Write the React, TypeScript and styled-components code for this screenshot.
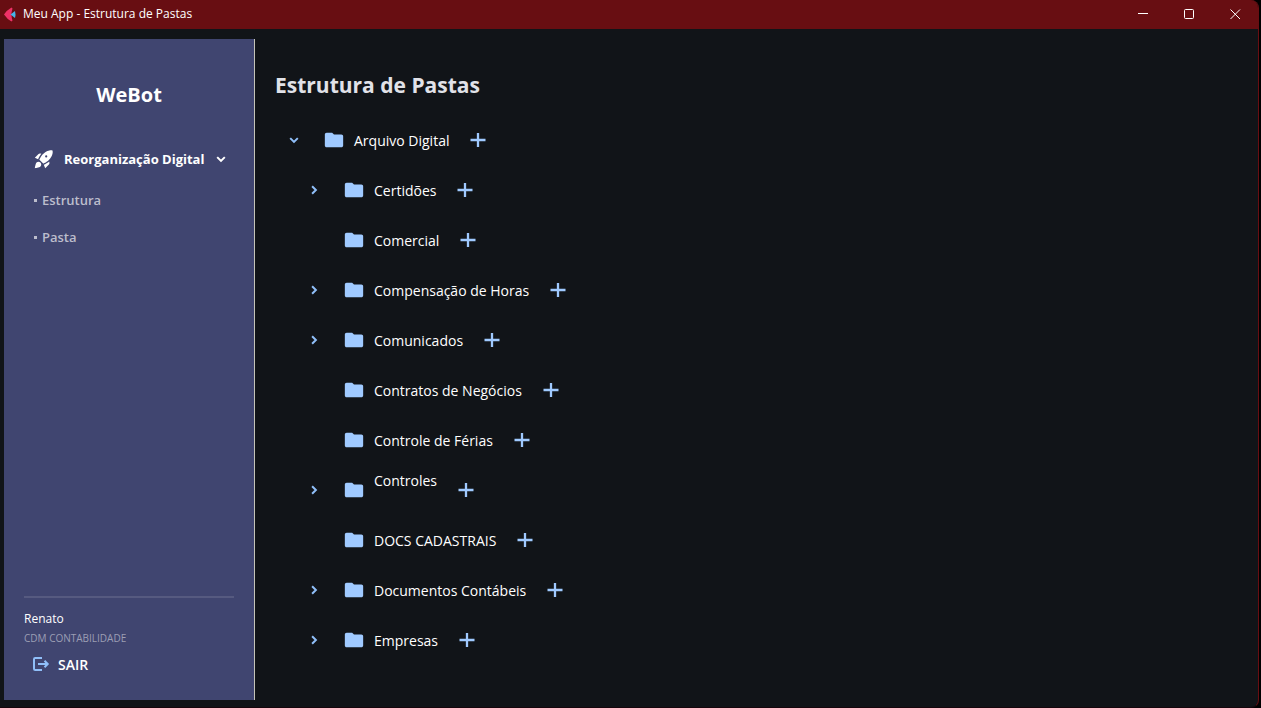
import React from "react";
import styled, { createGlobalStyle } from "styled-components";
import { MdFolder } from "react-icons/md";

const GlobalStyle = createGlobalStyle`
  * { box-sizing: border-box; }
  html, body, #root { height: 100%; }
  body { margin: 0; background: #000; font-family: "Open Sans", "Noto Sans", sans-serif; }
  button { font: inherit; color: inherit; background: none; border: 0; padding: 0; cursor: pointer; }
  ul { list-style: none; margin: 0; padding: 0; }
`;

const Window = styled.div`
  display: flex;
  flex-direction: column;
  min-height: 100%;
  margin-right: 2px;
  border-right: 1px solid #680e12;
  border-bottom: 1px solid #16060c;
  border-radius: 0 8px 8px 0;
  overflow: hidden;
  background: #111418;
`;

const TitleBar = styled.header`
  display: flex;
  align-items: center;
  height: 29px;
  padding-left: 4px;
  background: #680e12;
  color: #fff;
  font-size: 12px;
  line-height: 16px;
`;

const Caption = styled.span`
  flex: 1;
  padding: 0 0 2px 7px;
`;

const WindowButton = styled.button`
  display: flex;
  align-items: center;
  justify-content: center;
  width: 46px;
  height: 28px;
`;

const Body = styled.div`
  display: flex;
  flex: 1;
  padding: 10px 4px 7px;
`;

const Sidebar = styled.aside`
  display: flex;
  flex-direction: column;
  flex: 0 0 251px;
  padding: 20px;
  border-right: 1px solid #c4c4b8;
  background: #404570;
  color: #fff;
`;

const Brand = styled.h2`
  margin: 20px 0 36px;
  font-size: 20px;
  line-height: 32px;
  font-weight: 700;
  text-align: center;
`;

const Group = styled.button`
  display: flex;
  align-items: center;
  height: 24px;
  padding-left: 9px;
  font-size: 13px;
  font-weight: 700;
`;

const GroupLabel = styled.span`
  width: 157px;
  padding-left: 9px;
  text-align: left;
`;

const SubMenu = styled.ul`
  padding: 10px 0 0 8px;
`;

const SubItem = styled.li`
  display: flex;
  align-items: center;
  height: 37px;
  color: #bcbdcc;
  font-size: 13px;
  font-weight: 600;

  &::before {
    content: "";
    width: 3px;
    height: 3px;
    margin: 2px 5px 0 2px;
    background: currentColor;
  }
`;

const Link = styled.a`
  color: inherit;
  text-decoration: none;
`;

const Account = styled.footer`
  margin-top: auto;
  border-top: 2px solid #565a80;
  padding-top: 12px;
`;

const UserName = styled.div`
  font-size: 12px;
  line-height: 18px;
`;

const Company = styled.div`
  color: #9c9eb4;
  font-size: 10px;
  line-height: 20px;
`;

const Logout = styled.button`
  display: flex;
  align-items: center;
  gap: 8px;
  height: 32px;
  padding-left: 9px;
  font-size: 14px;
  font-weight: 600;
`;

const Main = styled.main`
  flex: 1;
  min-width: 0;
  padding: 28px 20px 0;
`;

const Title = styled.h1`
  margin: 0;
  color: #e1e2e8;
  font-size: 21px;
  line-height: 36px;
  font-weight: 700;
`;

const Tree = styled.ul`
  padding-top: 12px;
`;

const Row = styled.li<{ $level: number }>`
  display: flex;
  align-items: center;
  height: 50px;
  padding-left: ${({ $level }) => 10 + $level * 20}px;
  color: #fff;
  font-size: 14px;
  line-height: 20px;
`;

const Toggle = styled.button`
  display: flex;
  width: 38px;
  height: 18px;
  color: #90bff9;
`;

const FolderIcon = styled(MdFolder)`
  color: #a0caff;
`;

const Name = styled.span<{ $raised?: boolean }>`
  padding: 2px 21px 0 9px;
  margin-bottom: ${({ $raised }) => ($raised ? 20 : 0)}px;
`;

const AddButton = styled.button`
  display: flex;
  color: #a0caff;
`;

const Chevron = ({ down }: { down?: boolean }) => (
  <svg width="18" height="18" viewBox="0 0 18 18" fill="none" stroke="currentColor" strokeWidth="2" aria-hidden="true">
    <path d={down ? "M5.2 7.1 9 10.9 12.8 7.1" : "M7.1 5.2 10.9 9 7.1 12.8"} />
  </svg>
);

const Plus = () => (
  <svg width="16" height="16" viewBox="0 0 16 16" fill="none" stroke="currentColor" strokeWidth="2.3" aria-hidden="true">
    <path d="M0.5 8H15.5M8 1V15" />
  </svg>
);

const Rocket = () => (
  <svg width="22" height="22" viewBox="0 0 24 24" fill="currentColor" fillRule="evenodd" aria-hidden="true">
    <path d="M9.19 6.35c-2.04 2.29-3.44 5.58-3.57 5.89L2 10.69l4.05-4.05c.47-.47 1.15-.68 1.81-.55zM17.65 14.81c-2.29 2.04-5.58 3.44-5.89 3.57L13.31 22l4.05-4.05c.47-.47.68-1.15.55-1.81zM9 18c0 .83-.34 1.58-.88 2.12C6.94 21.3 2 22 2 22s.7-4.94 1.88-6.12C4.42 15.34 5.17 15 6 15c1.66 0 3 1.34 3 3z" />
    <path d="M11.17 17s3.74-1.55 5.89-3.7c5.4-5.4 4.5-9.62 4.21-10.57-.95-.3-5.17-1.19-10.57 4.21C8.55 9.09 7 12.83 7 12.83zM13.2 9.2a1.2 1.2 0 1 0 2.4 0 1.2 1.2 0 1 0-2.4 0z" />
  </svg>
);

const Exit = () => (
  <svg width="17" height="16" viewBox="0 0 17 16" fill="none" stroke="#90bff9" strokeWidth="2" aria-hidden="true">
    <path d="M9 2H2.2Q1 2 1 3.2V12.8Q1 14 2.2 14H9M5 8H14.5M11.5 4.8 14.7 8 11.5 11.2" />
  </svg>
);

type Folder = { name: string; level: number; open?: boolean; leaf?: boolean; raised?: boolean };

const folders: Folder[] = [
  { name: "Arquivo Digital", level: 0, open: true },
  { name: "Certidões", level: 1 },
  { name: "Comercial", level: 1, leaf: true },
  { name: "Compensação de Horas", level: 1 },
  { name: "Comunicados", level: 1 },
  { name: "Contratos de Negócios", level: 1, leaf: true },
  { name: "Controle de Férias", level: 1, leaf: true },
  { name: "Controles", level: 1, raised: true },
  { name: "DOCS CADASTRAIS", level: 1, leaf: true },
  { name: "Documentos Contábeis", level: 1 },
  { name: "Empresas", level: 1 },
];

export default function App() {
  return (
    <>
      <GlobalStyle />
      <Window>
        <TitleBar>
          <svg width="12" height="16" viewBox="0 0 12 16" aria-hidden="true">
            <path d="M0 7.5Q3 3 7.5 0.5L8.5 1.5Q6.5 7.5 8.5 13.5L7.5 14.5Q3 12 0 7.5Z" fill="#ee3167" />
            <path d="M6.5 7.5 11 4Q12 7.5 11 11Z" fill="#45b4e8" />
          </svg>
          <Caption>Meu App - Estrutura de Pastas</Caption>
          <WindowButton aria-label="Minimizar">
            <svg width="10" height="11" stroke="#fff" fill="none"><path d="M0 4.5H10" /></svg>
          </WindowButton>
          <WindowButton aria-label="Maximizar">
            <svg width="10" height="12" stroke="#fff" fill="none"><rect x="0.5" y="0.5" width="9" height="9" rx="1" /></svg>
          </WindowButton>
          <WindowButton aria-label="Fechar">
            <svg width="11" height="12" stroke="#fff" fill="none"><path d="M0.5 0.5 10 10M10 0.5 0.5 10" /></svg>
          </WindowButton>
        </TitleBar>
        <Body>
          <Sidebar>
            <Brand>WeBot</Brand>
            <Group aria-expanded="true">
              <Rocket />
              <GroupLabel>Reorganização Digital</GroupLabel>
              <Chevron down />
            </Group>
            <SubMenu>
              <SubItem><Link href="#estrutura">Estrutura</Link></SubItem>
              <SubItem><Link href="#pasta">Pasta</Link></SubItem>
            </SubMenu>
            <Account>
              <UserName>Renato</UserName>
              <Company>CDM CONTABILIDADE</Company>
              <Logout>
                <Exit />
                SAIR
              </Logout>
            </Account>
          </Sidebar>
          <Main>
            <Title>Estrutura de Pastas</Title>
            <Tree>
              {folders.map((f) => (
                <Row key={f.name} $level={f.level}>
                  <Toggle aria-label={f.name} disabled={f.leaf}>
                    {!f.leaf && <Chevron down={f.open} />}
                  </Toggle>
                  <FolderIcon size={22} />
                  <Name $raised={f.raised}>{f.name}</Name>
                  <AddButton aria-label={`Adicionar em ${f.name}`}><Plus /></AddButton>
                </Row>
              ))}
            </Tree>
          </Main>
        </Body>
      </Window>
    </>
  );
}
